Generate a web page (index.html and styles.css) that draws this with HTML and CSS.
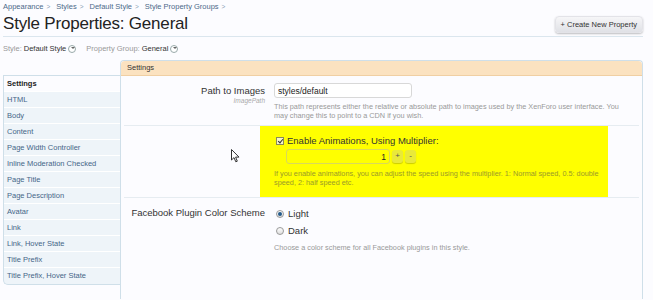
FILE: index.html
```html
<!DOCTYPE html>
<html lang="en">

<head>
  <meta charset="UTF-8" />
  <title>Style Properties: General</title>
  <link rel="stylesheet" href="styles.css">
</head>

<body>
  <div class="page">
    <nav class="breadcrumb">
      <a href="#">Appearance</a><span class="sep">&gt;</span>
      <a href="#">Styles</a><span class="sep">&gt;</span>
      <a href="#">Default Style</a><span class="sep">&gt;</span>
      <a href="#">Style Property Groups</a><span class="sep">&gt;</span>
    </nav>

    <div class="title-bar">
      <h1>Style Properties: General</h1>
      <a class="top-button" href="#">+ Create New Property</a>
    </div>

    <div class="filters">
      <span class="muted">Style:</span> <span class="chooser">Default Style<span class="drop"></span></span>
      <span class="muted group-label">Property Group:</span> <span class="chooser">General<span class="drop"></span></span>
    </div>

    <div class="tabs-layout">
      <ul class="side-tabs">
        <li class="active">Settings</li>
        <li>HTML</li>
        <li>Body</li>
        <li>Content</li>
        <li>Page Width Controller</li>
        <li>Inline Moderation Checked</li>
        <li>Page Title</li>
        <li>Page Description</li>
        <li>Avatar</li>
        <li>Link</li>
        <li>Link, Hover State</li>
        <li>Title Prefix</li>
        <li>Title Prefix, Hover State</li>
      </ul>

      <section class="panel">
        <h3 class="panel-head">Settings</h3>

        <dl class="ctrl-unit">
          <dt>
            <label>Path to Images</label>
            <span class="hint">ImagePath</span>
          </dt>
          <dd>
            <input class="text-ctrl" type="text" value="styles/default">
            <p class="explain">This path represents either the relative or absolute path to images used by the XenForo user interface. You may change this to point to a CDN if you wish.</p>
          </dd>
        </dl>

        <dl class="ctrl-unit">
          <dt></dt>
          <dd class="highlight">
            <div class="check-row"><span class="checkbox"></span>Enable Animations, Using Multiplier:</div>
            <div class="spin-row">
              <input class="text-ctrl spin" type="text" value="1">
              <span class="spin-btn">+</span>
              <span class="spin-btn">-</span>
            </div>
            <p class="explain">If you enable animations, you can adjust the speed using the multiplier. 1: Normal speed, 0.5: double speed, 2: half speed etc.</p>
          </dd>
        </dl>

        <dl class="ctrl-unit last">
          <dt>
            <label>Facebook Plugin Color Scheme</label>
          </dt>
          <dd>
            <div class="radio-row"><span class="radio checked"></span>Light</div>
            <div class="radio-row"><span class="radio"></span>Dark</div>
            <p class="explain">Choose a color scheme for all Facebook plugins in this style.</p>
          </dd>
        </dl>

        <svg class="cursor" width="9" height="14" viewBox="0 0 9 14">
          <path d="M0.5 0.5 L0.5 11 L3 8.6 L4.8 12.8 L6.3 12.2 L4.6 8.1 L8 8.1 Z" fill="#fff" stroke="#333" stroke-width="1" stroke-linejoin="round" />
        </svg>
      </section>
    </div>
  </div>
</body>

</html>
```

FILE: styles.css
```css
* {
  padding: 0;
  margin: 0;
  box-sizing: border-box;
}

body {
  background: #fcfcff;
  font-family: "Liberation Sans", Arial, sans-serif;
  font-size: 9px;
  color: #333;
}

.page {
  padding: 0 10px 0 3px;
}

.breadcrumb {
  display: flex;
  align-items: center;
  height: 12px;
  padding-top: 1px;
  font-size: 7.5px;
}

.breadcrumb a {
  color: #4c6a8a;
  text-decoration: none;
}

.breadcrumb .sep {
  color: #8aa0b5;
  margin: 0 6px 0 3px;
  font-size: 6.5px;
}

.title-bar {
  display: flex;
  justify-content: space-between;
  align-items: center;
  height: 25px;
  border-bottom: 1px solid #dbe6ee;
}

.title-bar h1 {
  font-size: 17px;
  font-weight: normal;
  color: #222;
  letter-spacing: -0.2px;
}

.top-button {
  padding: 3px 5px;
  font-size: 7.5px;
  color: #333;
  text-decoration: none;
  background: linear-gradient(#f6f6f8, #e0e1e6);
  border: 1px solid #e3e3e8;
  border-radius: 4px;
  box-shadow: 0 1px 2px rgba(0, 0, 0, 0.25);
}

.filters {
  display: flex;
  align-items: center;
  height: 23px;
  font-size: 7.5px;
}

.filters .muted {
  color: #999;
  margin-right: 2px;
}

.filters .group-label {
  margin-left: 10px;
}

.chooser {
  display: inline-flex;
  align-items: center;
  color: #333;
}

.drop {
  position: relative;
  width: 8px;
  height: 8px;
  margin-left: 2px;
  border: 1px solid #9aa;
  border-radius: 50%;
  background: #fff;
}

.drop::after {
  content: "";
  position: absolute;
  left: 1.5px;
  top: 1.5px;
  border-left: 2px solid transparent;
  border-right: 2px solid transparent;
  border-top: 2.5px solid #666;
}

.tabs-layout {
  display: grid;
  grid-template-columns: 117px 1fr;
  align-items: start;
}

.side-tabs {
  list-style: none;
  margin-top: 15px;
  border: 1px solid #cfdfe9;
  border-right: none;
  border-radius: 0 0 0 5px;
  background: #eef4f9;
  overflow: hidden;
}

.side-tabs li {
  height: 16px;
  line-height: 15px;
  padding-left: 3px;
  font-size: 7.5px;
  color: #456688;
  border-bottom: 1px solid #fff;
}

.side-tabs li:last-child {
  border-bottom: none;
}

.side-tabs li.active {
  background: #fcfcff;
  color: #222;
  font-weight: bold;
}

.panel {
  position: relative;
  height: 239px;
  border: 1px solid #cfdfe9;
  border-bottom: none;
  border-radius: 4px 4px 0 0;
  background: #fcfcff;
}

.panel-head {
  height: 15px;
  line-height: 14px;
  padding-left: 6px;
  font-size: 7.5px;
  font-weight: normal;
  color: #333;
  background: #fbe2c0;
  border-bottom: 1px solid #f0cfa3;
  border-radius: 4px 4px 0 0;
}

.ctrl-unit {
  display: flex;
  margin: 0 3px;
  border-bottom: 1px solid #e6ecf1;
}

.ctrl-unit.last {
  border-bottom: none;
}

.ctrl-unit dt {
  display: flex;
  flex-direction: column;
  align-items: flex-end;
  width: 141px;
  flex: none;
  padding-top: 9px;
}

.ctrl-unit dt label {
  white-space: nowrap;
  font-size: 9.5px;
  color: #333;
}

.ctrl-unit dt .hint {
  margin-top: 1px;
  font-size: 6.5px;
  font-style: italic;
  color: #aaa;
}

.ctrl-unit dd {
  padding: 7px 0 5px 9px;
  width: 362px;
}

.text-ctrl {
  display: block;
  width: 138px;
  height: 15px;
  padding: 0 3px;
  font-family: inherit;
  font-size: 8.5px;
  color: #222;
  background: #fff;
  border: 1px solid #d8d8d8;
  border-radius: 3px;
}

.explain {
  margin-top: 4px;
  font-size: 7.3px;
  line-height: 9px;
  color: #999;
}

.highlight {
  margin-left: -5px;
  width: 348px !important;
  min-height: 71px;
  padding: 9px 6px 0 14px !important;
  background: #ffff00;
}

.highlight .explain {
  color: #9a9a2a;
  margin-top: 5px;
}

.check-row {
  display: flex;
  align-items: center;
  font-size: 9.5px;
  color: #333;
}

.checkbox {
  position: relative;
  width: 8px;
  height: 8px;
  margin: 0 3px 0 2px;
  border: 1px solid #8a8a5a;
  background: #f5f5c8;
}

.checkbox::after {
  content: "";
  position: absolute;
  left: 1.5px;
  top: 0;
  width: 2px;
  height: 4px;
  border-right: 1.3px solid #333;
  border-bottom: 1.3px solid #333;
  transform: rotate(40deg);
}

.spin-row {
  display: flex;
  align-items: center;
  gap: 2px;
  margin: 3px 0 0 12px;
}

.spin-row .spin {
  width: 104px;
  text-align: right;
  background: #ffff00;
  border-color: #d9d95a;
}

.spin-btn {
  width: 11px;
  height: 13px;
  line-height: 12px;
  text-align: center;
  font-size: 8px;
  color: #555;
  background: #e9e93a;
  border-radius: 3px;
  box-shadow: 0 1px 1px rgba(0, 0, 0, 0.2);
}

.radio-row {
  display: flex;
  align-items: center;
  height: 17px;
  font-size: 9.5px;
  color: #333;
}

.radio {
  position: relative;
  width: 8px;
  height: 8px;
  margin: 0 4px 0 2px;
  border: 1px solid #999;
  border-radius: 50%;
  background: linear-gradient(#fff, #ddd);
}

.radio.checked::after {
  content: "";
  position: absolute;
  left: 1px;
  top: 1px;
  width: 4px;
  height: 4px;
  border-radius: 50%;
  background: #245a8a;
}

.cursor {
  position: absolute;
  left: 110px;
  top: 88px;
}
```
